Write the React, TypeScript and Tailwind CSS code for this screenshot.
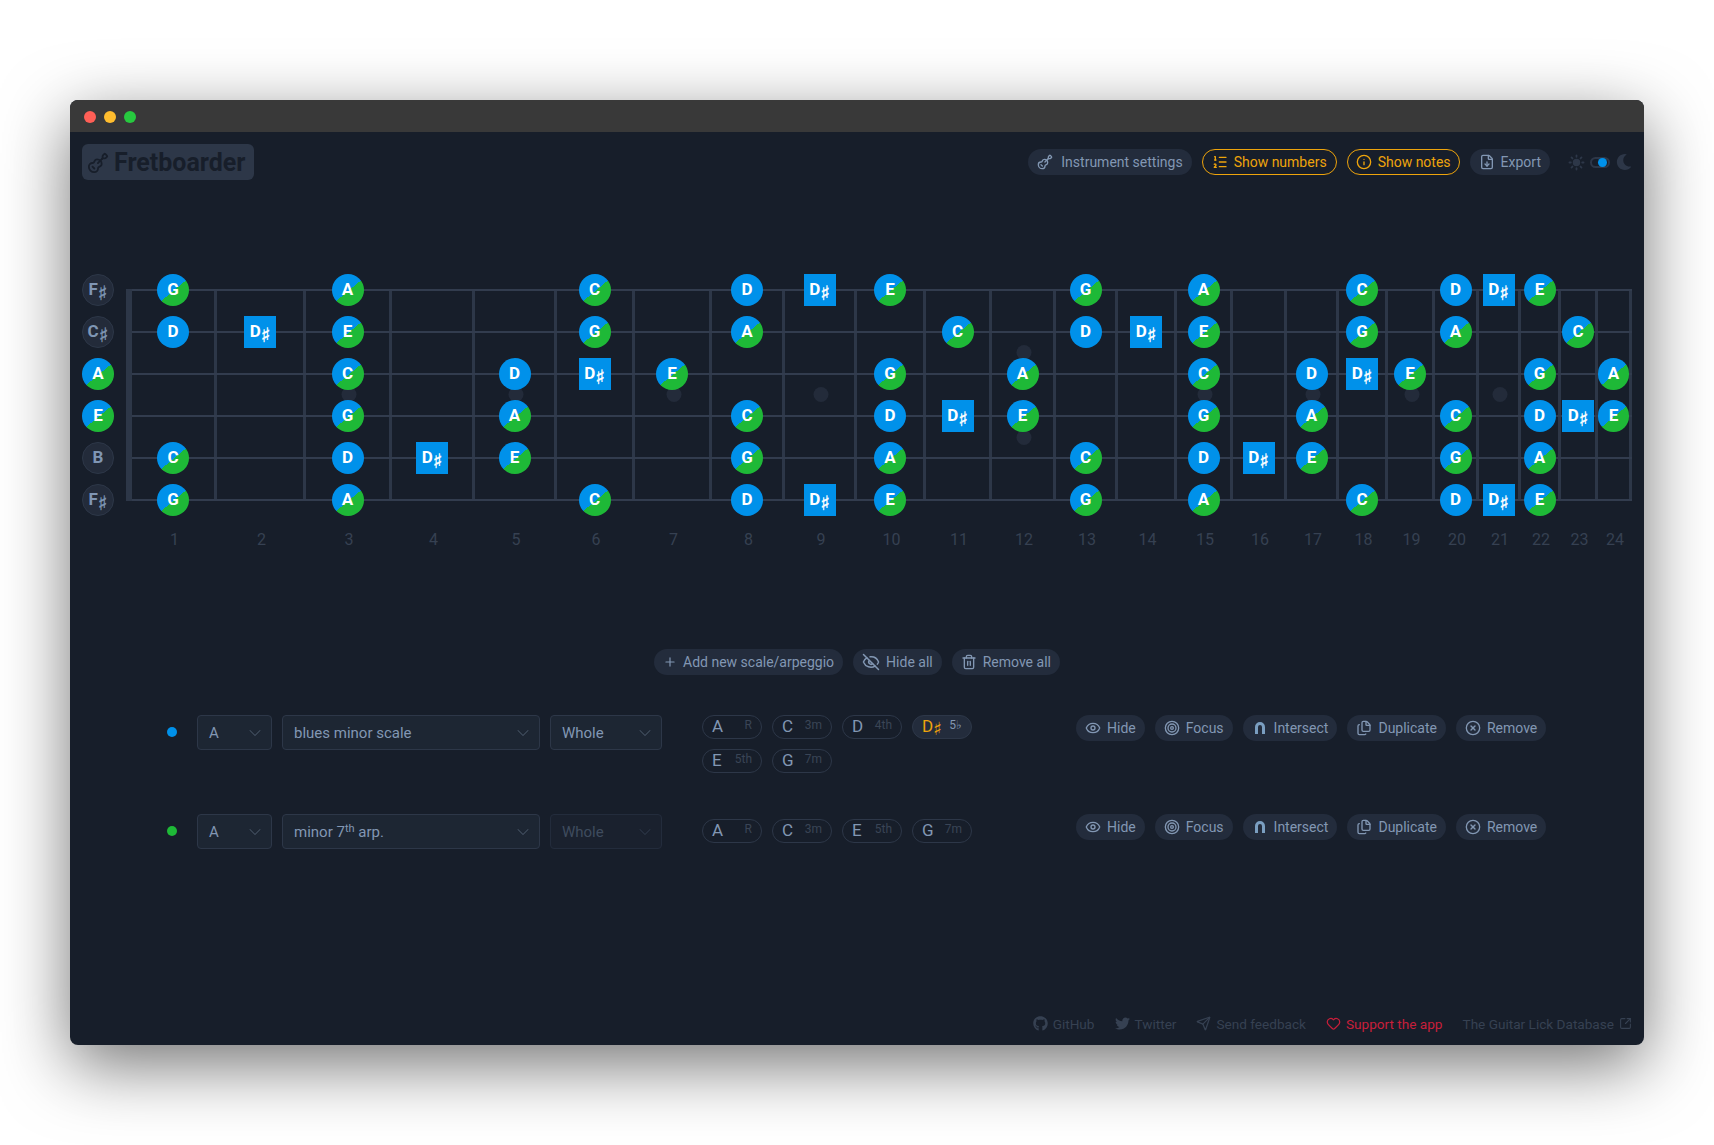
import React from 'react';
import {
  ChevronDown,
  CircleX,
  Files,
  Guitar,
  Heart,
  Info,
  ListOrdered,
  Plus,
  Send,
  SquareArrowOutUpRight,
  Sun,
  Target,
  Trash2,
  Eye,
  EyeOff,
  FileDown,
} from 'lucide-react';
import { FaGithub, FaMoon, FaTwitter } from 'react-icons/fa';

const FONT = "font-['Roboto','Noto_Sans',sans-serif]";

// right edge of every fret, measured from the left of the page
const FRET_EDGES = [217, 306, 392, 475, 557, 635, 712, 785, 857, 926, 992, 1056, 1118, 1177, 1233, 1287, 1339, 1388, 1435, 1479, 1521, 1561, 1598, 1632];
const FRET_WIDTHS = FRET_EDGES.map((edge, i) => edge - (i === 0 ? 132 : FRET_EDGES[i - 1]));

// fret -> note for each string, top to bottom
const STRINGS: { open: string; active: boolean; notes: Record<number, string> }[] = [
  { open: 'F#', active: false, notes: { 1: 'G', 3: 'A', 6: 'C', 8: 'D', 9: 'D#', 10: 'E', 13: 'G', 15: 'A', 18: 'C', 20: 'D', 21: 'D#', 22: 'E' } },
  { open: 'C#', active: false, notes: { 1: 'D', 2: 'D#', 3: 'E', 6: 'G', 8: 'A', 11: 'C', 13: 'D', 14: 'D#', 15: 'E', 18: 'G', 20: 'A', 23: 'C' } },
  { open: 'A', active: true, notes: { 3: 'C', 5: 'D', 6: 'D#', 7: 'E', 10: 'G', 12: 'A', 15: 'C', 17: 'D', 18: 'D#', 19: 'E', 22: 'G', 24: 'A' } },
  { open: 'E', active: true, notes: { 3: 'G', 5: 'A', 8: 'C', 10: 'D', 11: 'D#', 12: 'E', 15: 'G', 17: 'A', 20: 'C', 22: 'D', 23: 'D#', 24: 'E' } },
  { open: 'B', active: false, notes: { 1: 'C', 3: 'D', 4: 'D#', 5: 'E', 8: 'G', 10: 'A', 13: 'C', 15: 'D', 16: 'D#', 17: 'E', 20: 'G', 22: 'A' } },
  { open: 'F#', active: false, notes: { 1: 'G', 3: 'A', 6: 'C', 8: 'D', 9: 'D#', 10: 'E', 13: 'G', 15: 'A', 18: 'C', 20: 'D', 21: 'D#', 22: 'E' } },
];

const INLAYS = [3, 5, 7, 9, 15, 17, 19, 21];

const NoteName = ({ name, sharpClass }: { name: string; sharpClass: string }) => (
  <>
    {name[0]}
    {name[1] && <span className={`font-['DejaVu_Sans'] ${sharpClass}`}>♯</span>}
  </>
);

const Note = ({ name }: { name: string }) => {
  const shape =
    name === 'D#'
      ? 'bg-[#0091ea]'
      : name === 'D'
        ? 'bg-[#0091ea] rounded-full'
        : 'bg-[linear-gradient(140deg,#0091ea_52%,#1eb937_52%)] rounded-full';
  return (
    <div className={`relative z-10 flex h-8 w-8 items-center justify-center text-[17px] font-bold text-white ${shape}`}>
      <NoteName name={name} sharpClass="relative top-[3px] text-[20px] leading-none [-webkit-text-stroke:0.4px_currentColor]" />
    </div>
  );
};

const OpenNote = ({ name, active }: { name: string; active: boolean }) =>
  active ? (
    <Note name={name} />
  ) : (
    <div className="flex h-8 w-8 items-center justify-center rounded-full border border-[#2d3748] bg-[#232b3a] text-[17px] font-bold text-[#7f96b4]">
      <NoteName name={name} sharpClass="relative top-[3px] text-[20px] leading-none [-webkit-text-stroke:0.4px_currentColor]" />
    </div>
  );

const Fret = ({ fret, width }: { fret: number; width: number }) => (
  <div className="relative shrink-0" style={{ width }}>
    <div className="absolute top-[20px] right-0 bottom-[20px] w-[3px] bg-[#2d3748]" />
    {INLAYS.includes(fret) && (
      <div className="absolute top-[118px] left-1/2 h-[15px] w-[15px] -translate-x-1/2 rounded-full bg-[#232b3a]" />
    )}
    {fret === 12 && (
      <>
        <div className="absolute top-[76px] left-1/2 h-[15px] w-[15px] -translate-x-1/2 rounded-full bg-[#232b3a]" />
        <div className="absolute top-[161px] left-1/2 h-[15px] w-[15px] -translate-x-1/2 rounded-full bg-[#232b3a]" />
      </>
    )}
    {STRINGS.map((s, i) => (
      <div key={i} className="relative flex h-[42px] items-center justify-center pr-[3px]">
        <div className="absolute inset-x-0 top-[20px] h-[2px] bg-[#323c4e]" />
        {s.notes[fret] && <Note name={s.notes[fret]} />}
      </div>
    ))}
  </div>
);

const Fretboard = () => (
  <div className="mt-[89px]">
    <div className="flex">
      <div className="mr-3 flex w-8 flex-col">
        {STRINGS.map((s, i) => (
          <div key={i} className="flex h-[42px] items-center">
            <OpenNote name={s.open} active={s.active} />
          </div>
        ))}
      </div>
      <div className="my-[20px] w-[6px] bg-[#2d3748]" />
      {FRET_WIDTHS.map((w, i) => (
        <Fret key={i} fret={i + 1} width={w} />
      ))}
    </div>
    <div className="mt-[7px] flex pl-[50px]">
      {FRET_WIDTHS.map((w, i) => (
        <div key={i} className="shrink-0 text-center text-[16px] leading-6 text-[#364152]" style={{ width: w }}>
          {i + 1}
        </div>
      ))}
    </div>
  </div>
);

const Pill = ({
  icon,
  children,
  amber,
  className = 'gap-[6px] px-[9px]',
}: {
  icon: React.ReactNode;
  children: React.ReactNode;
  amber?: boolean;
  className?: string;
}) => (
  <div
    className={`flex h-[26px] items-center rounded-full text-[14px] whitespace-nowrap ${className} ${
      amber ? 'border border-[#eea40c] text-[#eea40c]' : 'bg-[#232c3c] text-[#8297b3]'
    }`}
  >
    {icon}
    {children}
  </div>
);

const Select = ({ className, children, disabled }: { className: string; children: React.ReactNode; disabled?: boolean }) => (
  <div
    className={`flex h-[35px] items-center justify-between rounded border pr-[6px] pl-[11px] text-[15px] ${className} ${
      disabled ? 'border-[#232c3c] bg-[#1a212e] text-[#3f4c5e]' : 'border-[#2d3748] bg-[#1d2633] text-[#8297b3]'
    }`}
  >
    <span className="pt-[2px]">{children}</span>
    <ChevronDown className={`h-5 w-5 ${disabled ? 'text-[#2d3748]' : 'text-[#465365]'}`} strokeWidth={1.25} />
  </div>
);

const Interval = ({ note, label, active }: { note: string; label: React.ReactNode; active?: boolean }) => (
  <div
    className={`relative flex h-6 w-[60px] items-center rounded-full border border-[#2d3748] pl-[9px] text-[17px] ${
      active ? 'bg-[#232c3c] text-[#eea40c]' : 'text-[#8297b3]'
    }`}
  >
    <NoteName name={note} sharpClass="relative top-[2px] text-[18px] leading-none" />
    <span className={`absolute top-[1px] right-[9px] text-[12px] leading-4 ${active ? 'text-[#8297b3]' : 'text-[#3a4556]'}`}>{label}</span>
  </div>
);

const Arch = () => (
  <svg viewBox="0 0 16 16" className="h-[16px] w-[16px]" fill="none">
    <path d="M3 14V7a5 5 0 0 1 10 0v7h-3V7a2 2 0 0 0-4 0v7z" fill="#7a9ec0" />
  </svg>
);

const ScaleActions = () => {
  const icon = 'h-[16px] w-[16px]';
  return (
    <div className="flex gap-[10px]">
      <Pill icon={<Eye className={icon} />}>Hide</Pill>
      <Pill icon={<Target className={icon} />}>Focus</Pill>
      <Pill icon={<Arch />}>Intersect</Pill>
      <Pill icon={<Files className={icon} />}>Duplicate</Pill>
      <Pill icon={<CircleX className={icon} />}>Remove</Pill>
    </div>
  );
};

const ScaleRow = ({
  color,
  scale,
  intervals,
  wholeDisabled,
  className,
  intervalsClass = '',
}: {
  color: string;
  scale: React.ReactNode;
  intervals: { note: string; label: React.ReactNode; active?: boolean }[];
  wholeDisabled?: boolean;
  className: string;
  intervalsClass?: string;
}) => (
  <div className={`flex items-start pl-[85px] ${className}`}>
    <div className={`mt-3 mr-[20px] h-[10px] w-[10px] rounded-full ${color}`} />
    <div className="flex gap-[10px]">
      <Select className="w-[75px]">A</Select>
      <Select className="w-[258px]">{scale}</Select>
      <Select className="w-[112px]" disabled={wholeDisabled}>
        Whole
      </Select>
    </div>
    <div className={`mr-[104px] ml-10 flex w-[270px] flex-wrap content-start gap-[10px] ${intervalsClass}`}>
      {intervals.map((it) => (
        <Interval key={it.note} {...it} />
      ))}
    </div>
    <ScaleActions />
  </div>
);

export default function App() {
  const small = 'h-[16px] w-[16px]';
  return (
    <div className={`min-h-[1145px] bg-white pt-[100px] pl-[70px] ${FONT}`}>
      <div className="flex h-[945px] w-[1574px] flex-col overflow-hidden rounded-lg bg-[#171e2a] shadow-[0_20px_68px_rgba(0,0,0,0.55)]">
        <div className="flex h-8 items-center gap-2 bg-[#393939] pt-[2px] pl-[14px]">
          <span className="h-3 w-3 rounded-full bg-[#ff5f56]" />
          <span className="h-3 w-3 rounded-full bg-[#ffbd2e]" />
          <span className="h-3 w-3 rounded-full bg-[#27c93f]" />
        </div>
        <div className="flex flex-1 flex-col px-3 pt-3">
          <div className="flex items-start justify-between">
            <div className="flex h-9 w-[172px] items-center gap-[5px] rounded-md bg-[#2d3748] pt-[1px] pl-[5px] text-[25px] font-bold text-[#171e2a]">
              <Guitar className="h-[22px] w-[22px]" />
              Fretboarder
            </div>
            <div className="mt-[5px] flex items-center gap-[10px]">
              <Pill className="gap-[8px] px-[9px]" icon={<Guitar className={small} />}>
                Instrument settings
              </Pill>
              <Pill amber icon={<ListOrdered className={small} />}>
                Show numbers
              </Pill>
              <Pill amber className="gap-[6px] px-[8px]" icon={<Info className={small} />}>
                Show notes
              </Pill>
              <Pill icon={<FileDown className={small} />}>Export</Pill>
              <div className="ml-[8px] flex items-center gap-[5px]">
                <Sun className="h-[17px] w-[17px] fill-[#2d3748] text-[#2d3748]" strokeWidth={2.5} />
                <div className="flex h-[11px] w-5 items-center justify-end rounded-full border-2 border-[#2d3748] pr-[1px]">
                  <span className="h-[9px] w-[9px] rounded-full bg-[#0091ea]" />
                </div>
                <FaMoon className="ml-[1px] h-[16px] w-[16px] text-[#2d3748]" />
              </div>
            </div>
          </div>
          <Fretboard />
          <div className="mt-[97px] flex justify-center gap-[10px]">
            <Pill icon={<Plus className="h-[14px] w-[14px]" />}>Add new scale/arpeggio</Pill>
            <Pill icon={<EyeOff className="h-[18px] w-[18px]" />}>Hide all</Pill>
            <Pill icon={<Trash2 className={small} />}>Remove all</Pill>
          </div>
          <ScaleRow
            className="mt-10 h-[59px]"
            color="bg-[#0091ea]"
            scale="blues minor scale"
            intervals={[
              { note: 'A', label: 'R' },
              { note: 'C', label: '3m' },
              { note: 'D', label: '4th' },
              { note: 'D#', label: <>5♭</>, active: true },
              { note: 'E', label: '5th' },
              { note: 'G', label: '7m' },
            ]}
          />
          <ScaleRow
            className="mt-10"
            intervalsClass="mt-[5px]"
            color="bg-[#1eb937]"
            wholeDisabled
            scale={
              <>
                minor 7<sup className="text-[11px]">th</sup> arp.
              </>
            }
            intervals={[
              { note: 'A', label: 'R' },
              { note: 'C', label: '3m' },
              { note: 'E', label: '5th' },
              { note: 'G', label: '7m' },
            ]}
          />
          <div className="mt-auto mb-[11px] flex justify-end gap-5 text-[13.6px] text-[#364152]">
            <span className="flex items-center gap-[5px]">
              <FaGithub className="h-[15px] w-[15px]" />
              GitHub
            </span>
            <span className="flex items-center gap-[5px]">
              <FaTwitter className="h-[15px] w-[15px]" />
              Twitter
            </span>
            <span className="flex items-center gap-[5px]">
              <Send className="h-[15px] w-[15px]" />
              Send feedback
            </span>
            <span className="flex items-center gap-[5px] text-[#c81e3a]">
              <Heart className="h-[15px] w-[15px]" />
              Support the app
            </span>
            <span className="flex items-center gap-[5px]">
              The Guitar Lick Database
              <SquareArrowOutUpRight className="h-[13px] w-[13px]" />
            </span>
          </div>
        </div>
      </div>
    </div>
  );
}
